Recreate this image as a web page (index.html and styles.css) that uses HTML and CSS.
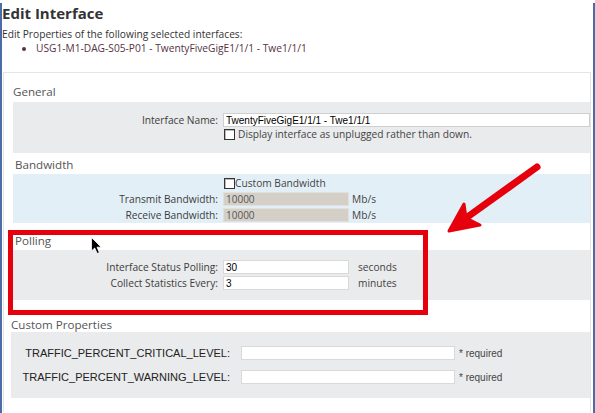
FILE: index.html
```html
<!DOCTYPE html>
<html>
<head>
<meta charset="utf-8">
<title>Edit Interface</title>
<link rel="stylesheet" href="styles.css">
</head>
<body>
<div class="frame">
  <h1 class="title">Edit Interface</h1>
  <p class="intro">Edit Properties of the following selected interfaces:</p>
  <ul class="iflist"><li>USG1-M1-DAG-S05-P01 - TwentyFiveGigE1/1/1 - Twe1/1/1</li></ul>

  <div class="form">
    <section class="group group-general">
      <h2 class="group-title">General</h2>
      <div class="panel panel-gray panel-general">
        <div class="row">
          <span class="label">Interface Name:</span>
          <input class="text text-wide" type="text" value="TwentyFiveGigE1/1/1 - Twe1/1/1">
        </div>
        <div class="row row-check">
          <span class="label"></span>
          <input class="check" type="checkbox">
          <span class="check-label">Display interface as unplugged rather than down.</span>
        </div>
      </div>
    </section>

    <section class="group group-bandwidth">
      <h2 class="group-title">Bandwidth</h2>
      <div class="panel panel-blue panel-bandwidth">
        <div class="row">
          <span class="label"></span>
          <input class="check" type="checkbox">
          <span class="check-label tight">Custom Bandwidth</span>
        </div>
        <div class="row">
          <span class="label">Transmit Bandwidth:</span>
          <input class="text text-mid disabled" type="text" value="10000" disabled>
          <span class="unit unit-bw">Mb/s</span>
        </div>
        <div class="row">
          <span class="label">Receive Bandwidth:</span>
          <input class="text text-mid disabled" type="text" value="10000" disabled>
          <span class="unit unit-bw">Mb/s</span>
        </div>
      </div>
    </section>

    <section class="group group-polling">
      <h2 class="group-title">Polling</h2>
      <div class="panel panel-gray panel-polling">
        <div class="row">
          <span class="label">Interface Status Polling:</span>
          <input class="text text-mid" type="text" value="30">
          <span class="unit">seconds</span>
        </div>
        <div class="row">
          <span class="label">Collect Statistics Every:</span>
          <input class="text text-mid" type="text" value="3">
          <span class="unit">minutes</span>
        </div>
      </div>
    </section>

    <section class="group group-custom">
      <h2 class="group-title">Custom Properties</h2>
      <div class="panel panel-gray panel-custom">
        <div class="row row-custom">
          <span class="label label-custom">TRAFFIC_PERCENT_CRITICAL_LEVEL:</span>
          <input class="text text-custom" type="text" value="">
          <span class="required">* required</span>
        </div>
        <div class="row row-custom">
          <span class="label label-custom">TRAFFIC_PERCENT_WARNING_LEVEL:</span>
          <input class="text text-custom" type="text" value="">
          <span class="required">* required</span>
        </div>
      </div>
    </section>
  </div>

  <svg class="overlay" width="595" height="413" viewBox="0 0 595 413" xmlns="http://www.w3.org/2000/svg">
    <rect x="10.5" y="229.5" width="415" height="80" fill="none" stroke="#e5000c" stroke-width="5"/>
    <line x1="537" y1="164" x2="466" y2="215" stroke="#e5000c" stroke-width="7" stroke-linecap="round"/>
    <polygon points="449,228 464,201 466,215 480,222" fill="#e5000c" stroke="#e5000c" stroke-width="3" stroke-linejoin="round"/>
    <path d="M91.5 234.5 L91.5 248 L94.7 245 L97.2 250.5 L99.4 249.5 L97 244.2 L101.2 244.2 Z" fill="#000" stroke="#fff" stroke-width="0.8"/>
  </svg>
</div>
</body>
</html>
```

FILE: styles.css
```css
* { box-sizing: border-box; }

html, body {
  margin: 0;
  padding: 0;
  background: #fff;
}

body {
  width: 595px;
  height: 413px;
  overflow: hidden;
  font-family: "Open Sans", "DejaVu Sans", sans-serif;
  color: #333;
}

.frame {
  position: relative;
  width: 595px;
  height: 413px;
  border: 2px solid #4a6daa;
  border-top: 0;
}

.title {
  margin: 3px 0 0 0;
  font-size: 15px;
  line-height: 20px;
  font-weight: 700;
  color: #333;
}

.intro {
  margin: 4px 0 0 0;
  font-size: 10.2px;
  line-height: 14px;
  color: #333;
}

.iflist {
  margin: 0;
  padding: 0 0 0 34px;
  font-size: 10.2px;
  line-height: 14px;
  color: #553344;
}

.form {
  margin: 17px 2px 0 1px;
  border: 1px solid #e4e4e4;
  border-bottom: 0;
  padding-top: 11px;
  height: 340px;
}

.group {
  margin-left: 9px;
}

.group-title {
  margin: 0;
  font-size: 11.6px;
  line-height: 16px;
  font-weight: 400;
  color: #555;
}

.group-general .group-title { margin-bottom: 2px; }
.group-bandwidth { margin-top: 4px; }
.group-bandwidth .group-title { margin-bottom: 1px; margin-left: 2px; }
.group-polling { margin-top: 10px; }
.group-polling .group-title { margin-bottom: 1px; margin-left: 2px; }
.group-custom { margin-top: 17px; margin-left: 7px; }
.group-custom .group-title { margin-bottom: -1px; }

.panel {
  display: flex;
  flex-direction: column;
}

.panel-gray { background: #eaebec; }
.panel-blue { background: #e3eff7; }

.panel-general { padding: 11px 0 12px; gap: 0; height: 51px; }
.panel-bandwidth { padding: 2px 0 1px; gap: 2px; height: 49px; }
.panel-polling { padding: 10px 0 10px; gap: 2px; height: 50px; }
.panel-custom { padding: 14px 0 14px; gap: 10px; height: 66px; }

.row {
  display: flex;
  align-items: center;
  height: 14px;
  font-size: 10.2px;
  color: #3c3c3c;
}

.label {
  flex: 0 0 205px;
  text-align: right;
  margin-right: 5px;
  white-space: nowrap;
}

.text {
  height: 14px;
  margin: 0;
  padding: 0 2px;
  border: 1px solid #d9d9d9;
  background: #fff;
  font-family: "Liberation Sans", Arial, sans-serif;
  font-size: 10px;
  color: #000;
  outline: none;
}

.text-wide { flex: 1 1 auto; min-width: 0; border-color: #cfcfcf; }
.text-mid { width: 126px; flex: 0 0 126px; }

.disabled {
  background: #d4d0c8;
  border-color: #e2e0dc;
  font-family: "Open Sans", sans-serif;
  color: #555;
}

.unit { margin-left: 9px; color: #444; }
.unit-bw { margin-left: 3px; }

.check {
  -webkit-appearance: none;
  appearance: none;
  width: 11px;
  height: 11px;
  margin: 0 0 0 1px;
  border: 1px solid #333;
  background: #fff;
  box-shadow: inset 1px 1px 0 #bbb;
  flex: 0 0 11px;
}

.check-label { margin-left: 3px; color: #444; }
.check-label.tight { margin-left: 0; }

.row-check { height: 14px; }

.label-custom {
  flex: 0 0 219px;
  margin-right: 11px;
  font-family: "Liberation Sans", Arial, sans-serif;
  font-size: 11px;
  color: #222;
}

.text-custom { width: 214px; flex: 0 0 214px; }

.required {
  margin-left: 4px;
  font-family: "Liberation Sans", Arial, sans-serif;
  font-size: 10px;
  color: #444;
}

.overlay {
  position: absolute;
  left: -2px;
  top: 0;
  pointer-events: none;
}
```
